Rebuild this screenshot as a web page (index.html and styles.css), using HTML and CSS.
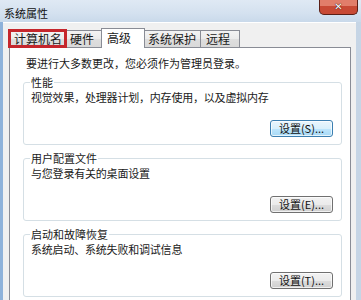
FILE: index.html
```html
<!DOCTYPE html>
<html lang="zh-CN">
<head>
<meta charset="utf-8">
<title>系统属性</title>
<link rel="stylesheet" href="styles.css">
</head>
<body>
<div class="window">
  <div class="titlebar">
    <span class="title">系统属性</span>
    <div class="close"><span class="close-x">✕</span></div>
  </div>
  <div class="client">
    <div class="tabs">
      <div class="tab marked">计算机名</div>
      <div class="tab">硬件</div>
      <div class="tab active">高级</div>
      <div class="tab">系统保护</div>
      <div class="tab wide">远程</div>
    </div>
    <div class="page">
      <p class="note">要进行大多数更改，您必须作为管理员登录。</p>
      <fieldset class="group">
        <legend>性能</legend>
        <p class="desc">视觉效果，处理器计划，内存使用，以及虚拟内存</p>
        <div class="actions"><button class="btn focused">设置(S)...</button></div>
      </fieldset>
      <fieldset class="group">
        <legend>用户配置文件</legend>
        <p class="desc">与您登录有关的桌面设置</p>
        <div class="actions"><button class="btn">设置(E)...</button></div>
      </fieldset>
      <fieldset class="group">
        <legend>启动和故障恢复</legend>
        <p class="desc">系统启动、系统失败和调试信息</p>
        <div class="actions"><button class="btn">设置(T)...</button></div>
      </fieldset>
    </div>
  </div>
</div>
</body>
</html>
```
FILE: styles.css
```css
html, body {
  margin: 0;
  padding: 0;
}
body {
  width: 361px;
  height: 300px;
  overflow: hidden;
  font-family: "Noto Sans CJK SC", "Liberation Sans", sans-serif;
  font-size: 11px;
  color: #1a1a1a;
  background: #c9d7e6;
}
.window {
  height: 300px;
  display: flex;
  flex-direction: column;
  background: linear-gradient(to right, #8eb2da 0, #8eb2da 3px, #d3dfec 3px, #c6d5e5 100%);
}
.titlebar {
  height: 22px;
  flex: none;
  display: flex;
  align-items: flex-start;
  justify-content: space-between;
  background: linear-gradient(to bottom, #dfe9f4 0%, #d4e1ef 60%, #c9d9ea 100%);
}
.title {
  margin: 7px 0 0 4px;
  font-size: 11px;
  line-height: 13px;
  color: #111;
}
.close {
  flex: none;
  width: 39px;
  height: 15px;
  margin-right: 3px;
  box-sizing: border-box;
  border: 1px solid #5a1f16;
  border-top: 0;
  border-radius: 0 0 5px 5px;
  background: #c84a35;
  box-shadow: inset 0 6px 0 rgba(255, 190, 170, 0.45);
  display: flex;
  align-items: center;
  justify-content: center;
}
.close-x {
  font-family: "DejaVu Sans", sans-serif;
  font-size: 10px;
  font-weight: bold;
  line-height: 12px;
  color: #ffffff;
  text-shadow: 0 0 1px #3a0f0a, 0 0 1px #3a0f0a;
}
.client {
  flex: 1;
  margin: 0 5px 0 3px;
  padding: 5px 5px 0 6px;
  background: #f0f0f0;
  border-top: 1px solid #ffffff;
  display: flex;
  flex-direction: column;
}
.tabs {
  display: flex;
  align-items: flex-end;
  height: 19px;
  position: relative;
  z-index: 1;
}
.tab {
  box-sizing: border-box;
  height: 17px;
  min-width: 39px;
  padding: 0 4px;
  border: 1px solid #898c95;
  border-bottom: none;
  margin-right: -1px;
  background: linear-gradient(to bottom, #f3f3f3 0%, #ebebeb 50%, #dedede 51%, #d9d9d9 100%);
  font-size: 12px;
  line-height: 16px;
  white-space: nowrap;
}
.tab.wide {
  min-width: 40px;
  padding-left: 5px;
}
.tab.marked {
  width: 57px;
  outline: 3px solid #c5262c;
  outline-offset: -2px;
  position: relative;
  z-index: 2;
}
.tab.active {
  height: 20px;
  min-width: 44px;
  margin: 0 -2px -1px -2px;
  padding: 0 5px;
  background: #ffffff;
  line-height: 18px;
  position: relative;
  z-index: 1;
}
.tab.active + .tab {
  margin-left: 0;
}
.page {
  flex: 1;
  background: #ffffff;
  border: 1px solid #898c95;
  border-bottom: none;
  padding: 8px 8px 0 13px;
}
.note {
  margin: 0 0 5px 3px;
  line-height: 14px;
}
.group {
  margin: 0 0 6px 0;
  padding: 0 8px 7px 6px;
  border: 1px solid #d5dfe5;
  border-radius: 3px;
  min-width: 0;
}
.group legend {
  padding: 0 1px;
  line-height: 14px;
}
.desc {
  margin: 1px 0 0 1px;
  line-height: 14px;
  letter-spacing: -0.2px;
}
.actions {
  display: flex;
  justify-content: flex-end;
  margin-top: 16px;
}
.btn {
  box-sizing: border-box;
  width: 63px;
  height: 17px;
  padding: 0;
  font-family: "Noto Sans CJK SC", "Liberation Sans", sans-serif;
  font-size: 11px;
  line-height: 15px;
  color: #111;
  border: 1px solid #707070;
  border-radius: 3px;
  background: linear-gradient(to bottom, #f2f2f2 0%, #ebebeb 50%, #dddddd 51%, #cfcfcf 100%);
  box-shadow: inset 0 0 0 1px rgba(255,255,255,0.7);
}
.btn.focused {
  border-color: #3c7fb1;
  background: linear-gradient(to bottom, #eaf6fd 0%, #d9f0fc 50%, #bee6fd 51%, #a7d9f5 100%);
}
```
